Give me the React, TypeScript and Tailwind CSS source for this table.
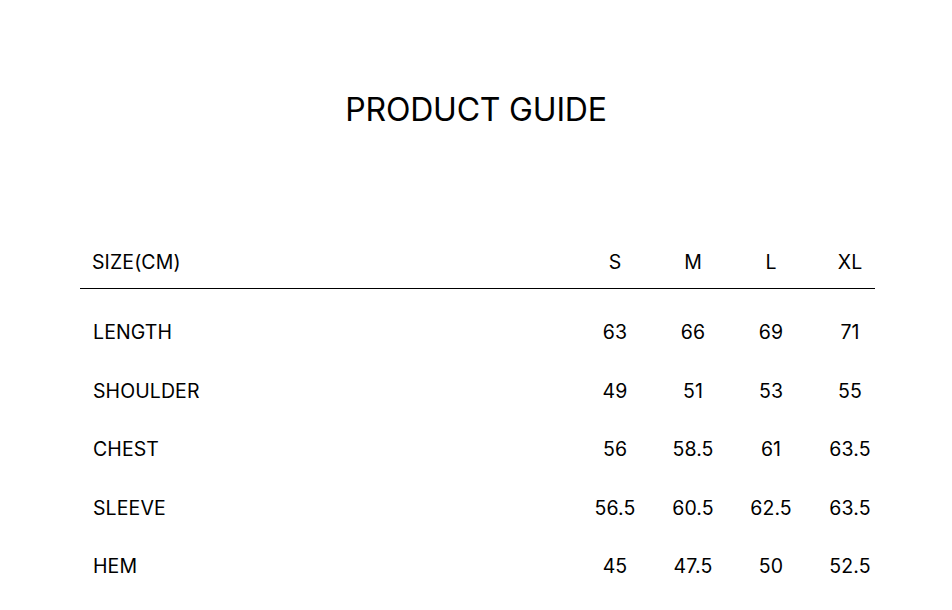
const sizes = ['S', 'M', 'L', 'XL'];

const rows: { label: string; values: string[] }[] = [
  { label: 'LENGTH', values: ['63', '66', '69', '71'] },
  { label: 'SHOULDER', values: ['49', '51', '53', '55'] },
  { label: 'CHEST', values: ['56', '58.5', '61', '63.5'] },
  { label: 'SLEEVE', values: ['56.5', '60.5', '62.5', '63.5'] },
  { label: 'HEM', values: ['45', '47.5', '50', '52.5'] },
];

function Cells({ values }: { values: string[] }) {
  return (
    <>
      {values.map((v, i) => (
        <div
          key={i}
          className={i === 3 ? 'w-[65px] pl-[15px] text-center' : 'w-[78px] text-center'}
        >
          {v}
        </div>
      ))}
    </>
  );
}

export default function App() {
  return (
    <div className="min-h-screen w-full bg-white text-black font-['Inter',sans-serif]">
      <h1 className="pt-[90px] text-center text-[32px] leading-[40px] tracking-[-0.2px]">
        PRODUCT GUIDE
      </h1>

      {/* size table */}
      <div className="ml-[80px] mt-[120px] w-[795px] text-[19.5px] leading-[24px] tracking-[0.1px]">
        <div className="flex items-center border-b border-black pb-[14px]">
          <div className="flex-1 pl-[12px]">SIZE(CM)</div>
          <Cells values={sizes} />
        </div>
        <div className="pt-[14px]">
          {rows.map((r) => (
            <div key={r.label} className="flex h-[58.5px] items-center">
              <div className="flex-1 pl-[13px]">{r.label}</div>
              <Cells values={r.values} />
            </div>
          ))}
        </div>
      </div>
    </div>
  );
}
